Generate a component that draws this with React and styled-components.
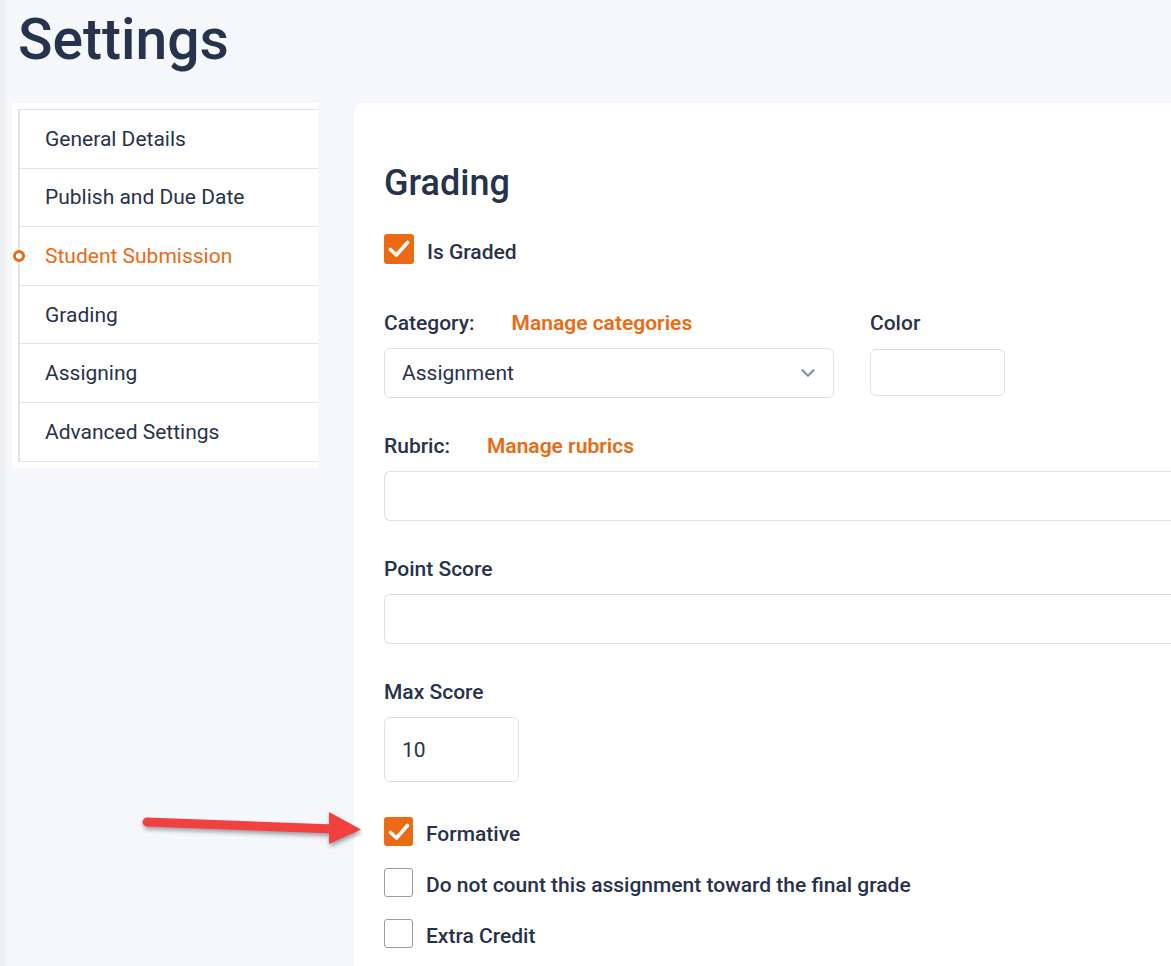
import React from 'react';
import styled, { createGlobalStyle } from 'styled-components';
import { ChevronDown } from 'lucide-react';

const GlobalStyle = createGlobalStyle`
  html, body {
    margin: 0;
    padding: 0;
    overflow: hidden;
    background: linear-gradient(to right, #eff1f5 0, #eff1f5 6px, #f5f7fb 6px);
    font-family: Roboto, "Liberation Sans", sans-serif;
    color: #27324d;
  }
`

const Page = styled.div`
  position: relative;
  min-height: 966px;
`

const Title = styled.h1`
  margin: 0;
  padding: 5px 0 0 18px;
  font-size: 57px;
  line-height: 70px;
  font-weight: 500;
  color: #27324d;
`

const Body = styled.div`
  display: flex;
  align-items: flex-start;
  gap: 36px;
  padding-left: 12px;
  margin-top: 28px;
`

const Sidebar = styled.nav`
  width: 306px;
  flex-shrink: 0;
  background: #fff;
  padding: 6px 0 6px 6px;
  box-sizing: border-box;
`

const NavList = styled.ul`
  list-style: none;
  margin: 0;
  padding: 0;
  border-left: 2px solid #e2e2e2;
`

const NavItem = styled.li`
  position: relative;
  box-sizing: border-box;
  height: 58.6px;
  display: flex;
  align-items: center;
  padding-left: 25px;
  border-top: 1px solid #e4e4e4;
  font-size: 21px;
  color: ${(props) => (props.active ? '#ec6a13' : '#27324d')};
  &:last-child {
    height: 59.6px;
    border-bottom: 1px solid #e4e4e4;
  }
`

const Marker = styled.span`
  position: absolute;
  left: -7px;
  top: 50%;
  width: 6px;
  height: 6px;
  margin-top: -6px;
  border: 3px solid #ec6a13;
  border-radius: 50%;
  background: #fff;
`

const Card = styled.main`
  flex: 1;
  min-width: 900px;
  background: #fff;
  border-radius: 8px 0 0 0;
  padding: 59px 0 40px 30px;
  min-height: 860px;
  box-sizing: border-box;
`

const Heading = styled.h2`
  margin: 0 0 29px;
  font-size: 36px;
  line-height: 43px;
  font-weight: 500;
  color: #27324d;
`

const CheckRow = styled.label`
  display: flex;
  align-items: center;
  gap: 13px;
  font-size: 21px;
  line-height: 25px;
  font-weight: 500;
  color: #27324d;
  margin-bottom: ${(props) => props.mb || 0}px;
`

const CheckText = styled.span`
  position: relative;
  top: 3px;
`

const Box = styled.span`
  width: ${(props) => props.size || 29}px;
  height: ${(props) => props.size || 29}px;
  box-sizing: border-box;
  border-radius: 3px;
  display: flex;
  align-items: center;
  justify-content: center;
  background: ${(props) => (props.checked ? '#ec6a13' : '#fff')};
  border: ${(props) => (props.checked ? 'none' : '1.5px solid #9c9c9c')};
`

const FieldRow = styled.div`
  display: flex;
  gap: 36px;
  margin-bottom: ${(props) => props.mb || 36}px;
`

const Field = styled.div`
  display: flex;
  flex-direction: column;
  gap: 12px;
  width: ${(props) => props.width || '100%'};
`

const LabelLine = styled.div`
  display: flex;
  gap: 37px;
  font-size: 21px;
  line-height: 25px;
  font-weight: 500;
  color: #27324d;
`

const Link = styled.span`
  color: #ec6a13;
  font-weight: 600;
`

const Input = styled.div`
  box-sizing: border-box;
  height: ${(props) => props.h || 50}px;
  margin-top: ${(props) => props.mt || 0}px;
  border: 1px solid #e0e0e0;
  border-radius: ${(props) => (props.open ? '6px 0 0 6px' : '6px')};
  border-right: ${(props) => (props.open ? 'none' : '1px solid #e0e0e0')};
  display: flex;
  align-items: center;
  justify-content: space-between;
  padding: 0 14px 0 17px;
  font-size: 21px;
  color: #27324d;
`

const Arrow = styled.svg`
  position: absolute;
  left: 135px;
  top: 800px;
  filter: drop-shadow(1px 3px 2px rgba(0, 0, 0, 0.35));
`

const Check = () => (
  <svg width="24" height="24" viewBox="0 0 24 24">
    <polyline points="3.5,12.5 9.5,18 20.5,5.5" fill="none" stroke="#fff" strokeWidth="3.6" strokeLinecap="round" strokeLinejoin="round" />
  </svg>
)

const CheckBox = ({ checked, label, mb, size }) => (
  <CheckRow mb={mb}>
    <Box checked={checked} size={size}>{checked && <Check />}</Box>
    <CheckText>{label}</CheckText>
  </CheckRow>
)

const navItems = ['General Details', 'Publish and Due Date', 'Student Submission', 'Grading', 'Assigning', 'Advanced Settings']

const App = () => {
  return (
    <Page>
      <GlobalStyle />
      <Title>Settings</Title>
      <Body>
        <Sidebar>
          <NavList>
            {navItems.map((item) => (
              <NavItem key={item} active={item === 'Student Submission'}>
                {item === 'Student Submission' && <Marker />}
                {item}
              </NavItem>
            ))}
          </NavList>
        </Sidebar>
        <Card>
          <Heading>Grading</Heading>
          <CheckBox checked label="Is Graded" size={30} mb={47} />
          <FieldRow>
            <Field width="450px">
              <LabelLine>Category: <Link>Manage categories</Link></LabelLine>
              <Input>
                Assignment
                <ChevronDown size={22} color="#8193b2" strokeWidth={2.5} />
              </Input>
            </Field>
            <Field width="135px">
              <LabelLine>Color</LabelLine>
              <Input h={47} mt={1} />
            </Field>
          </FieldRow>
          <FieldRow>
            <Field>
              <LabelLine>Rubric: <Link>Manage rubrics</Link></LabelLine>
              <Input open />
            </Field>
          </FieldRow>
          <FieldRow>
            <Field>
              <LabelLine>Point Score</LabelLine>
              <Input open />
            </Field>
          </FieldRow>
          <FieldRow mb={35}>
            <Field width="135px">
              <LabelLine>Max Score</LabelLine>
              <Input h={65}>10</Input>
            </Field>
          </FieldRow>
          <CheckBox checked label="Formative" mb={22} />
          <CheckBox label="Do not count this assignment toward the final grade" mb={22} />
          <CheckBox label="Extra Credit" />
        </Card>
      </Body>
      <Arrow width="240" height="60" viewBox="0 0 240 60">
        <line x1="12" y1="22" x2="200" y2="29" stroke="#f2403f" strokeWidth="9" strokeLinecap="round" />
        <polygon points="194,12 226,29.5 194,44" fill="#f2403f" />
      </Arrow>
    </Page>
  )
}

export default App
